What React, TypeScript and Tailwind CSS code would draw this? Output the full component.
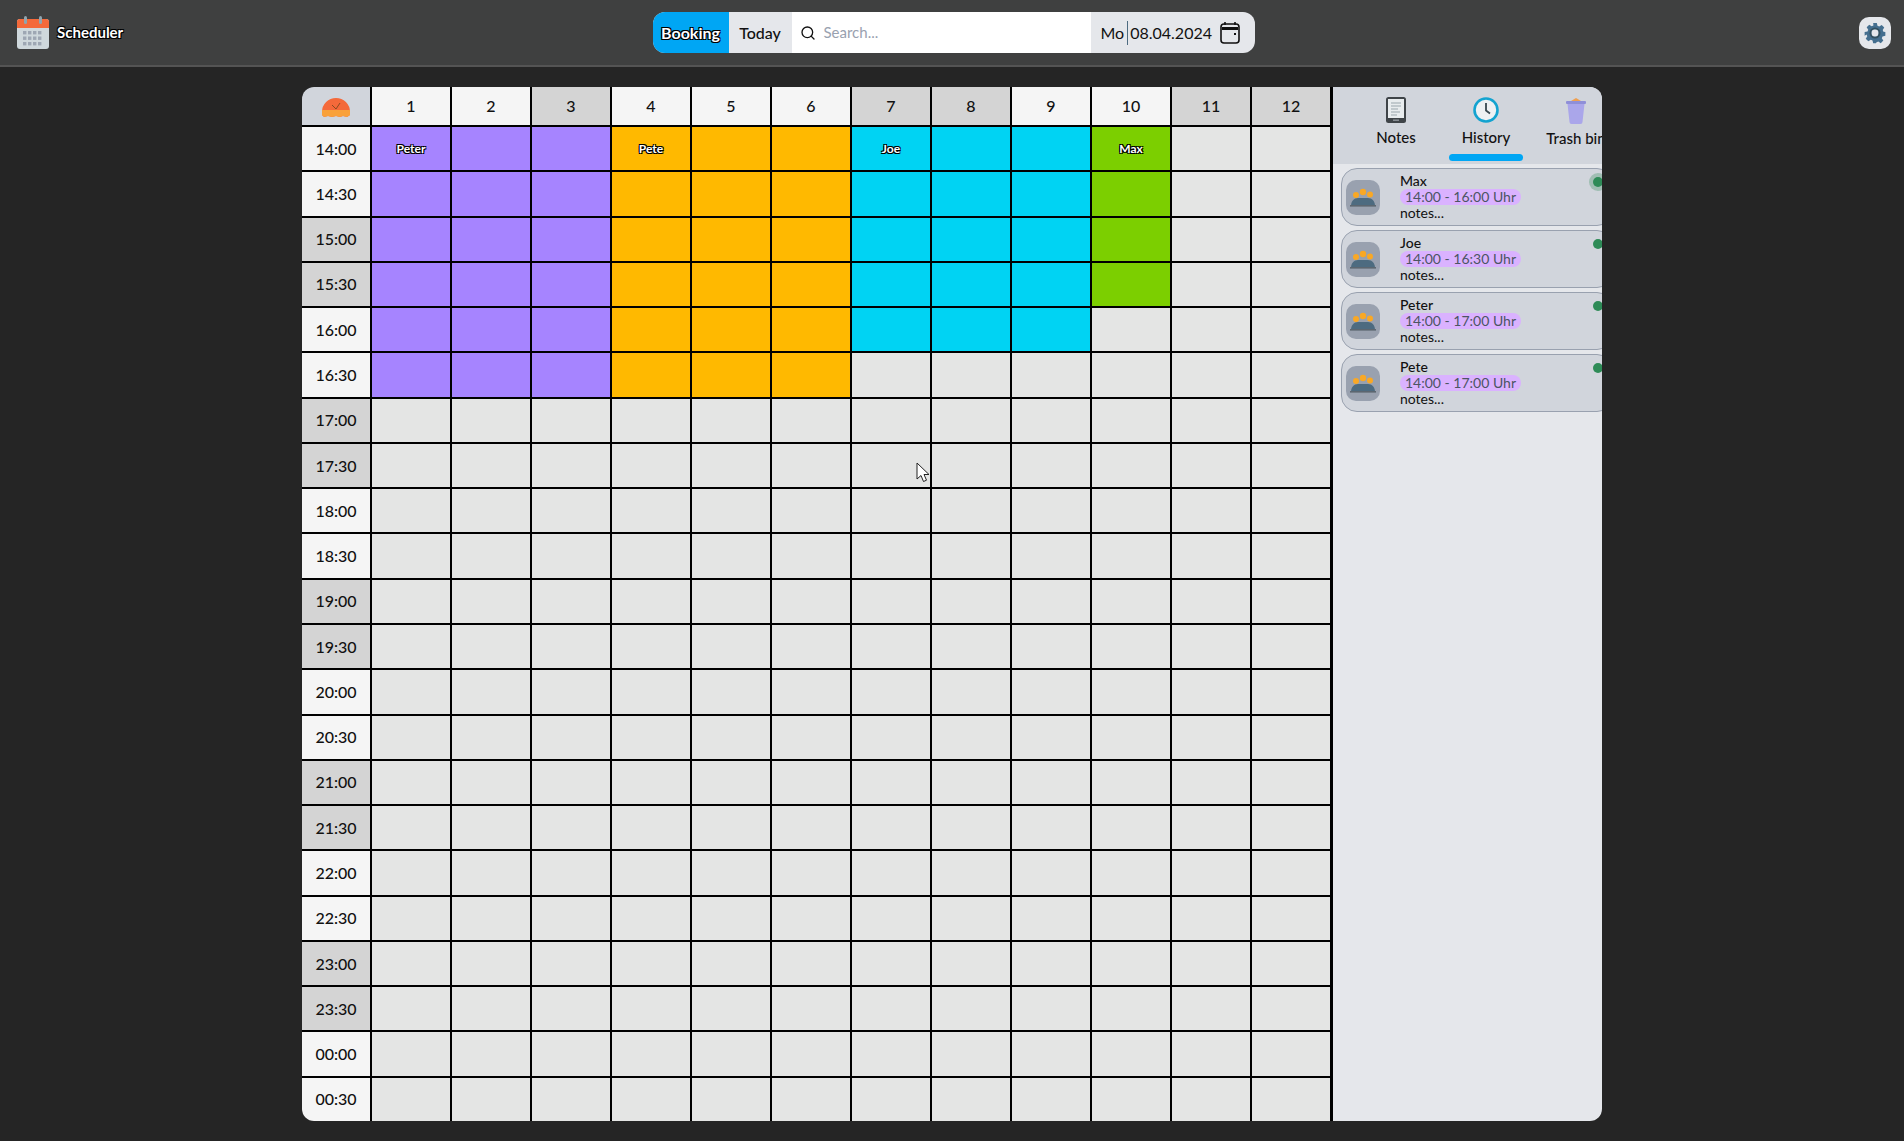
import { Search } from 'lucide-react';

const columns = [1, 2, 3, 4, 5, 6, 7, 8, 9, 10, 11, 12];
const shadedColumns = [3, 7, 8, 11, 12];

const times = [
  ['14:00', false], ['14:30', false], ['15:00', true], ['15:30', true], ['16:00', false], ['16:30', false],
  ['17:00', true], ['17:30', true], ['18:00', false], ['18:30', false], ['19:00', true], ['19:30', true],
  ['20:00', false], ['20:30', false], ['21:00', true], ['21:30', true], ['22:00', false], ['22:30', false],
  ['23:00', true], ['23:30', true], ['00:00', false], ['00:30', false],
] as const;

const bookings = [
  { name: 'Peter', from: 1, to: 3, rows: 6, color: 'bg-violet-400' },
  { name: 'Pete', from: 4, to: 6, rows: 6, color: 'bg-amber-400' },
  { name: 'Joe', from: 7, to: 9, rows: 5, color: 'bg-cyan-400' },
  { name: 'Max', from: 10, to: 10, rows: 4, color: 'bg-lime-500' },
];

const history = [
  { name: 'Max', time: '14:00 - 16:00 Uhr', live: true },
  { name: 'Joe', time: '14:00 - 16:30 Uhr', live: false },
  { name: 'Peter', time: '14:00 - 17:00 Uhr', live: false },
  { name: 'Pete', time: '14:00 - 17:00 Uhr', live: false },
];

const outline = '[text-shadow:-1px_-1px_0_#000,1px_-1px_0_#000,-1px_1px_0_#000,1px_1px_0_#000]';

function CalendarLogo() {
  return (
    <svg width="33" height="33" viewBox="0 0 33 33">
      <rect x="1" y="3" width="32" height="30" rx="3" fill="#cfd8dc" />
      <path d="M1 12V6a3 3 0 0 1 3-3h26a3 3 0 0 1 3 3v6z" fill="#f4693a" />
      <rect x="8" y="0" width="3" height="8" rx="1.5" fill="#90a4ae" />
      <rect x="23" y="0" width="3" height="8" rx="1.5" fill="#90a4ae" />
      {[0, 1, 2, 3].map((x) =>
        [0, 1, 2].map((y) => (
          <rect key={`${x}-${y}`} x={7 + x * 5} y={15 + y * 5.5} width="3.4" height="3.4" fill="#9ea7b3" />
        )),
      )}
    </svg>
  );
}

function SunriseIcon() {
  return (
    <svg width="30" height="24" viewBox="0 0 30 24">
      <path d="M1 18a14 14 0 0 1 28 0v3l-3 2-4-1-3 1-4-1-4 1-4-1-4 1-2-2z" fill="#f4693a" />
      <path d="M1 16h28v5l-3 2-4-1-3 1-4-1-4 1-4-1-4 1-2-2z" fill="#f9a13a" />
      <path d="M15 15l-4-4M15 15l4-6" stroke="#8a4a20" strokeWidth="1" fill="none" />
    </svg>
  );
}

function NotesIcon() {
  return (
    <svg width="20" height="26" viewBox="0 0 20 26">
      <rect width="20" height="26" rx="2.5" fill="#3f4448" />
      <rect x="2" y="2" width="16" height="19" fill="#e8ecee" />
      <path d="M5 6h10M5 9h10M5 12h7M5 15h9M5 18h6" stroke="#9aa5ab" strokeWidth="1.2" />
      <rect x="7" y="22.5" width="6" height="1.4" fill="#8d9499" />
    </svg>
  );
}

function ClockIcon() {
  return (
    <svg width="26" height="26" viewBox="0 0 26 26">
      <circle cx="13" cy="13" r="11.5" fill="#eef1f3" stroke="#13a3d0" strokeWidth="2.6" />
      <path d="M13 6v7.5l4 3" stroke="#37474f" strokeWidth="1.8" fill="none" />
    </svg>
  );
}

function TrashIcon() {
  return (
    <svg width="20" height="27" viewBox="0 0 20 27">
      <path d="M5 4l5-3 5 3z" fill="#f0a050" />
      <rect y="4" width="20" height="3" rx="1" fill="#8f8fd8" />
      <path d="M1.5 7h17l-2 18a2 2 0 0 1-2 2h-9a2 2 0 0 1-2-2z" fill="#aaa6ea" />
    </svg>
  );
}

function PeopleIcon() {
  return (
    <svg width="26" height="20" viewBox="0 0 26 20">
      <path d="M1 19c0-5 3-8 7-8h10c4 0 7 3 7 8z" fill="#4d6b80" />
      <rect x="0" y="18" width="26" height="1.6" fill="#5c6670" />
      <circle cx="6" cy="8" r="3" fill="#f9a825" />
      <circle cx="13" cy="5" r="3.2" fill="#f9a825" />
      <circle cx="20" cy="7.5" r="3" fill="#f9a825" />
    </svg>
  );
}

function DateIcon() {
  return (
    <svg width="20" height="24" viewBox="0 0 20 24" fill="none">
      <rect x="1" y="3" width="18" height="19" rx="3" stroke="#111" strokeWidth="1.6" />
      <path d="M5 1v3M15 1v3" stroke="#111" strokeWidth="1.6" />
      <rect x="2" y="6" width="16" height="3" fill="#111" />
      <rect x="14" y="12" width="2" height="2" fill="#111" />
    </svg>
  );
}

function GearIcon() {
  return (
    <svg width="22" height="22" viewBox="0 0 24 24">
      <path
        fillRule="evenodd"
        fill="#456f8f"
        d="M10 1h4l.7 3.1 1.9.8 2.7-1.7 2.8 2.8-1.7 2.7.8 1.9L23.3 11v4l-3.1.7-.8 1.9 1.7 2.7-2.8 2.8-2.7-1.7-1.9.8L13 23.3h-3l-.7-3.1-1.9-.8-2.7 1.7-2.8-2.8 1.7-2.7-.8-1.9L.7 15v-4l3.1-.7.8-1.9-1.7-2.7 2.8-2.8 2.7 1.7 1.9-.8zM12 8a4 4 0 1 0 0 8 4 4 0 0 0 0-8z"
      />
      <circle cx="12" cy="12" r="5" fill="none" stroke="#33505f" strokeWidth="2" />
    </svg>
  );
}

function Cursor() {
  return (
    <svg className="absolute left-[916px] top-[462px]" width="14" height="22" viewBox="0 0 14 22">
      <path d="M1 1v16l4-3.5 2.5 6 3-1.3-2.5-5.7h5z" fill="#fff" stroke="#222" strokeWidth="1" />
    </svg>
  );
}

export default function App() {
  return (
    <div className="relative flex h-[1141px] flex-col bg-[#252525] font-['Lato','Liberation_Sans',sans-serif] text-[#111]">
      <header className="flex h-[67px] shrink-0 items-center justify-between border-b-2 border-[#545454] bg-[#3f4040] pl-4 pr-[13px]">
        <div className="flex w-[300px] items-center gap-2">
          <CalendarLogo />
          <span className={`text-[15px] font-bold text-white ${outline}`}>Scheduler</span>
        </div>
        <div className="flex h-[41px] w-[602px] overflow-hidden rounded-xl bg-gray-200 text-[16px] font-medium">
          <div className={`flex w-[76px] items-center justify-center bg-sky-500 font-bold text-white ${outline}`}>Booking</div>
          <div className="flex w-[63px] items-center justify-center">Today</div>
          <div className="flex w-[299px] items-center gap-2 bg-white px-2 font-normal text-gray-400">
            <Search size={16} color="#111" />
            <span className="text-[15px]">Search...</span>
          </div>
          <div className="flex flex-1 items-center pl-[10px] font-normal">
            <span className="border-r border-[#4d6b80] pr-[3px]">Mo</span>
            <span className="ml-[2px]">08.04.2024</span>
            <span className="ml-2"><DateIcon /></span>
          </div>
        </div>
        <div className="flex w-[300px] justify-end">
          <div className="flex h-8 w-8 items-center justify-center rounded-[10px] bg-gray-200">
            <GearIcon />
          </div>
        </div>
      </header>

      <main className="flex flex-1 justify-center pl-[-1px] pt-[20px]">
        <div className="flex h-[1034px] w-[1300px] overflow-hidden rounded-xl bg-black">
          <div className="grid w-[1031px] shrink-0 grid-cols-[68px_repeat(12,78px)] grid-rows-[38px_repeat(22,1fr)] gap-[2px] border-r-2 border-black">
            <div className="flex items-center justify-center bg-gray-300"><SunriseIcon /></div>
            {columns.map((c) => (
              <div
                key={c}
                className={`flex items-center justify-center text-[16px] font-medium ${shadedColumns.includes(c) ? 'bg-[#d4d4d4]' : 'bg-[#f5f5f5]'}`}
              >
                {c}
              </div>
            ))}
            {times.map(([label, shaded], row) => (
              <>
                <div
                  key={label}
                  className={`flex items-center justify-center text-[16px] font-medium ${shaded ? 'bg-[#d4d4d4]' : 'bg-[#f5f5f5]'}`}
                >
                  {label}
                </div>
                {columns.map((c) => {
                  const booking = bookings.find((b) => c >= b.from && c <= b.to && row < b.rows);
                  return (
                    <div
                      key={`${label}-${c}`}
                      className={`flex items-center justify-center text-[12px] font-bold text-white ${outline} ${booking ? booking.color : 'bg-[#e4e5e4]'}`}
                    >
                      {booking && row === 0 && c === booking.from ? booking.name : ''}
                    </div>
                  );
                })}
              </>
            ))}
          </div>

          <aside className="flex flex-1 flex-col bg-gray-200">
            <div className="flex h-[77px] shrink-0 items-start bg-gray-300 pl-[20px] pt-[10px] text-[15px] font-medium">
              <div className="flex w-[86px] flex-col items-center gap-[3px]">
                <NotesIcon />
                <span>Notes</span>
              </div>
              <div className="flex w-[94px] flex-col items-center gap-[3px]">
                <ClockIcon />
                <span>History</span>
                <div className="mt-[2px] h-[7px] w-[74px] rounded-full bg-sky-500" />
              </div>
              <div className="flex w-[86px] flex-col items-center gap-[3px]">
                <TrashIcon />
                <span className="whitespace-nowrap">Trash bin</span>
              </div>
            </div>
            <div className="flex flex-col gap-1 py-1 pl-2 pr-[6px]">
              {history.map((item) => (
                <div key={item.name} className="relative flex h-[58px] items-center rounded-2xl border border-gray-400 bg-gray-300 pl-[4px]">
                  <div className="flex h-[35px] w-[34px] items-center justify-center rounded-[10px] bg-gray-400">
                    <PeopleIcon />
                  </div>
                  <div className="ml-5 flex flex-col text-[14px] leading-[16px]">
                    <span className="font-medium">{item.name}</span>
                    <span className="w-fit rounded-full bg-purple-300 px-[5px] text-[#4b5563]">{item.time}</span>
                    <span>notes...</span>
                  </div>
                  {item.live && <span className="absolute right-[5px] top-[4px] h-[18px] w-[18px] rounded-full bg-[#2e8b57]/30" />}
                  <span className="absolute right-[9px] top-2 h-[10px] w-[10px] rounded-full bg-[#2e8b57]" />
                </div>
              ))}
            </div>
          </aside>
        </div>
      </main>
      <Cursor />
    </div>
  );
}
